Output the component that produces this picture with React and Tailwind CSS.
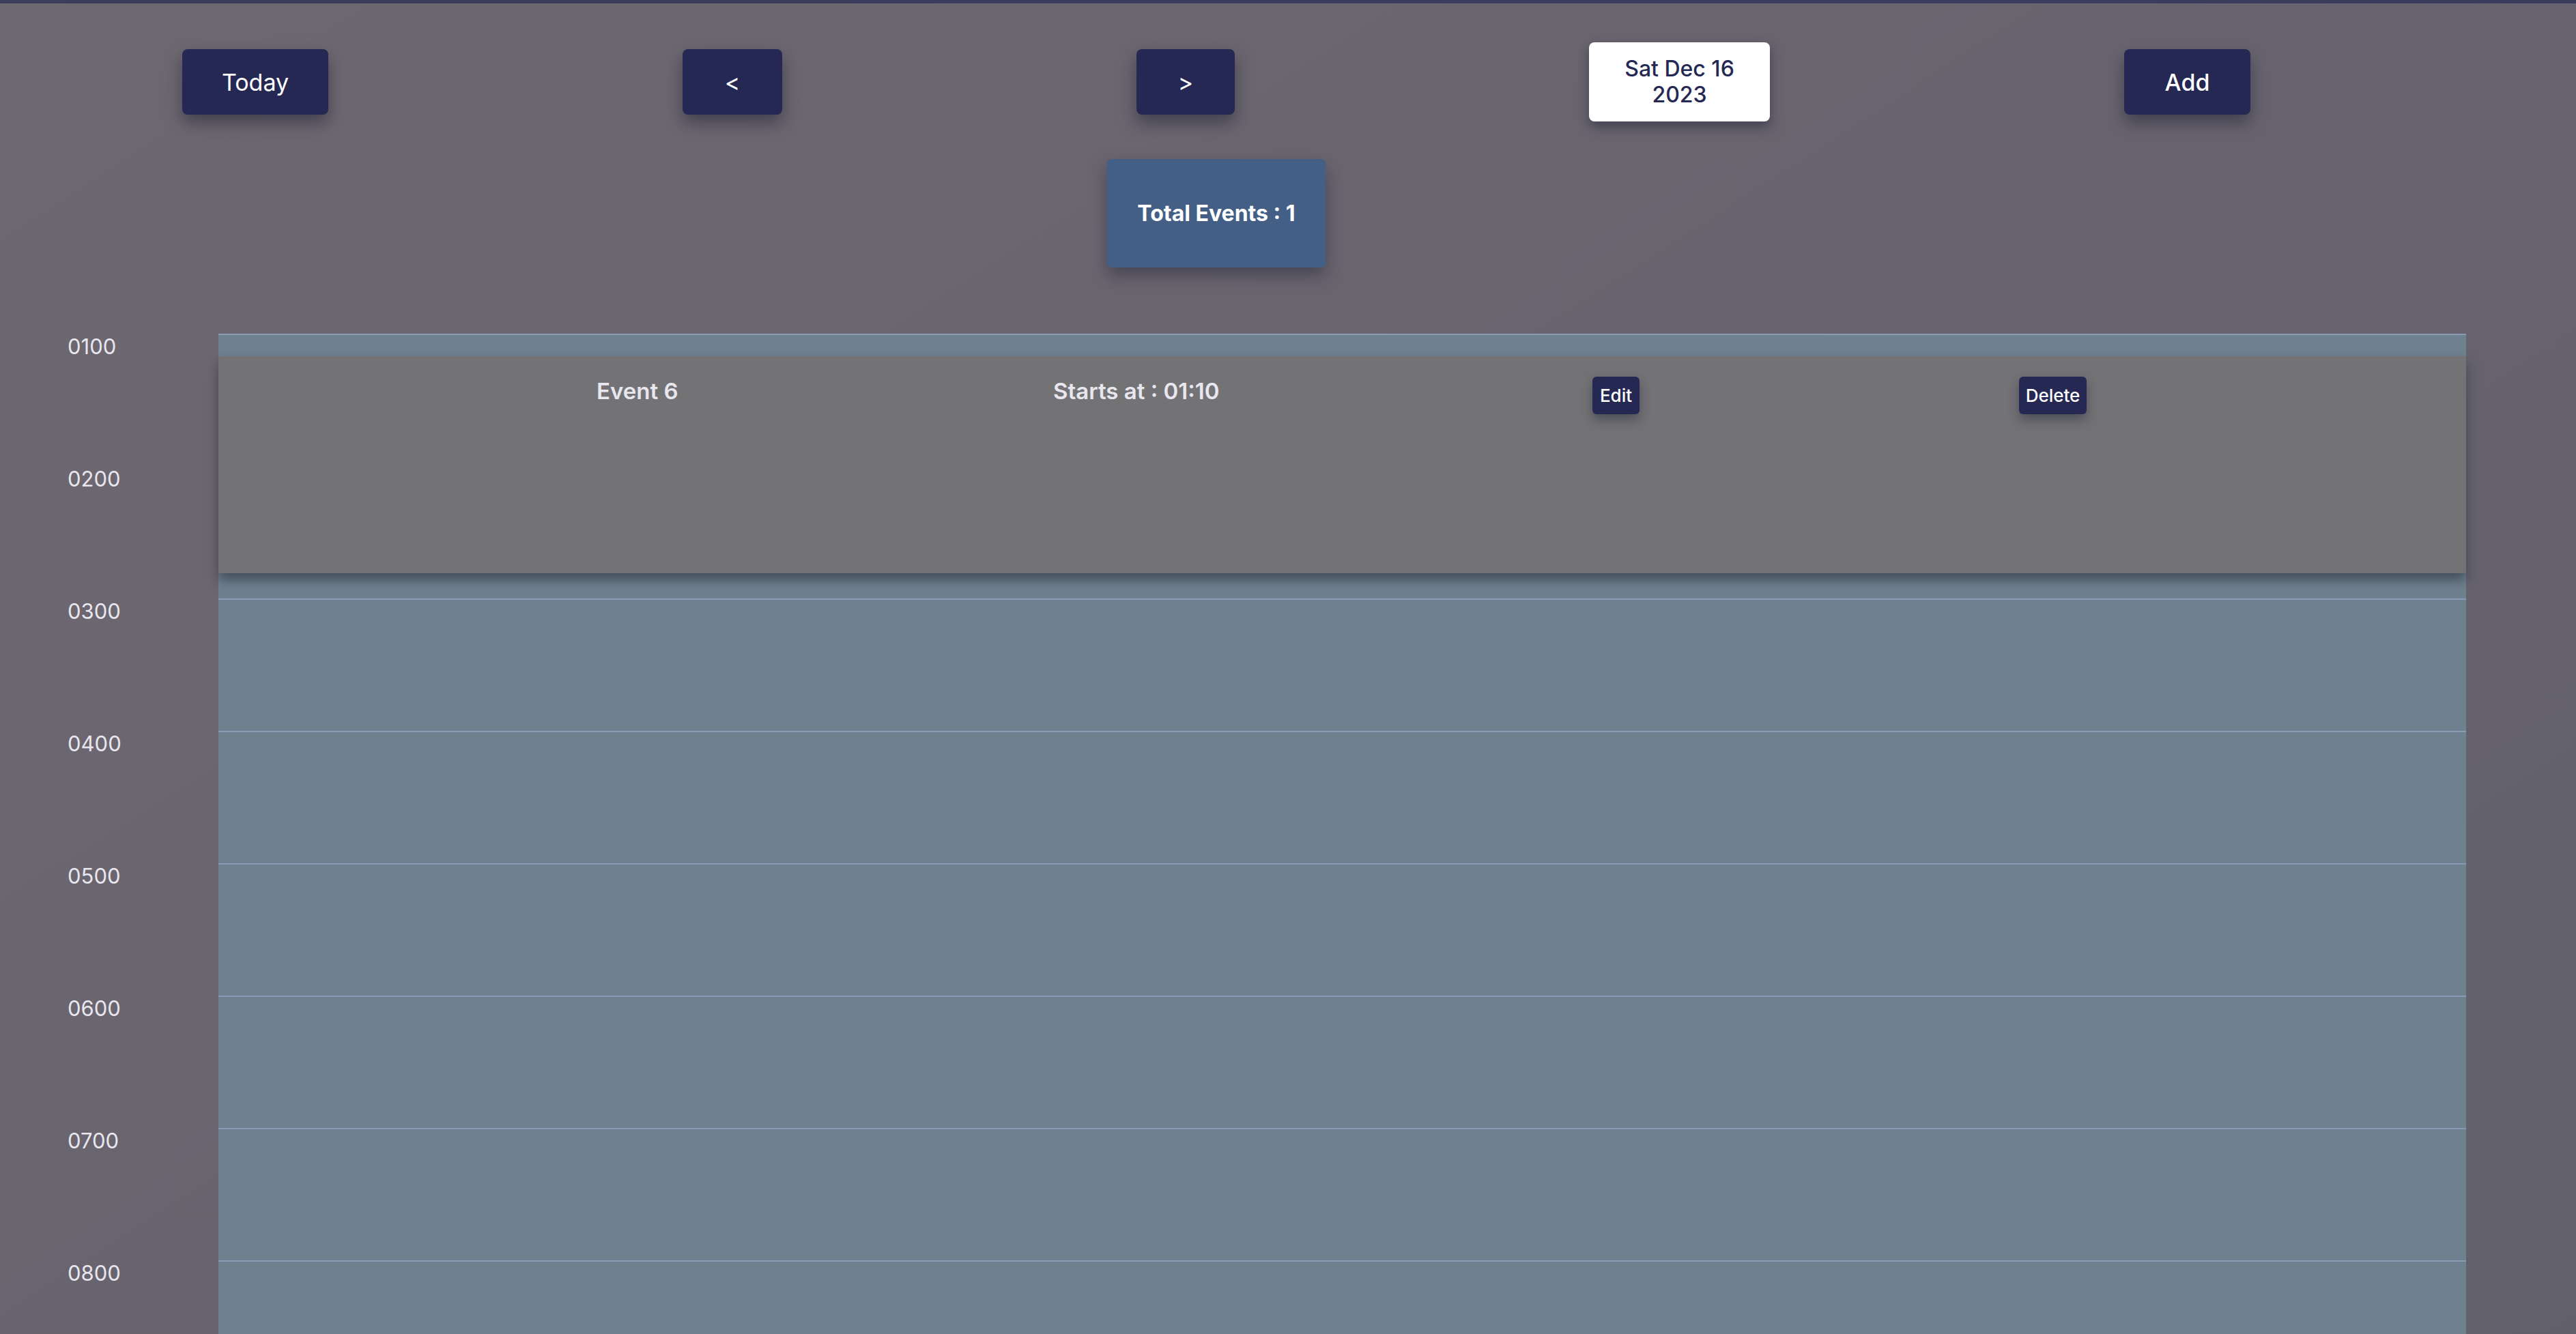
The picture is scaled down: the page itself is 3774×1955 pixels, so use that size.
import React from 'react'

const hours = ['0100', '0200', '0300', '0400', '0500', '0600', '0700', '0800', '0900', '1000']

export default function App() {
  return (
    <div
      className="min-h-[1955px] w-[3774px] overflow-hidden border-t-[5px] border-[#3b3d5c] bg-gradient-to-br from-[#6e6870] to-[#615f6d] text-white"
      style={{ fontFamily: 'Inter, "Noto Sans", sans-serif' }}
    >
      {/* toolbar */}
      <div className="flex items-center gap-[519px] pl-[267px] pt-[55px] h-[175px]">
        <button className="w-[214px] h-[96px] rounded-lg bg-[#242852] text-[34px] shadow-[0_12px_24px_rgba(40,40,60,0.6)]">Today</button>
        <button className="w-[146px] h-[96px] rounded-lg bg-[#242852] text-[34px] shadow-[0_12px_24px_rgba(40,40,60,0.6)]">&lt;</button>
        <button className="w-[144px] h-[96px] rounded-lg bg-[#242852] text-[34px] shadow-[0_12px_24px_rgba(40,40,60,0.6)]">&gt;</button>
        <div className="w-[265px] h-[116px] rounded-lg bg-white text-[#242852] text-[32px] leading-[38px] font-medium flex flex-col items-center justify-center shadow-[0_8px_18px_rgba(40,40,60,0.6)]">
          <span>Sat Dec 16</span>
          <span>2023</span>
        </div>
        <button className="w-[185px] h-[96px] rounded-lg bg-[#242852] text-[34px] font-medium shadow-[0_12px_24px_rgba(40,40,60,0.6)]">Add</button>
      </div>

      {/* total */}
      <div className="flex pl-[1622px] pt-[53px]">
        <div className="w-[320px] h-[159px] rounded-md bg-[#445f85] flex items-center justify-center text-[32px] font-bold shadow-[0_12px_24px_rgba(40,40,60,0.5)]">
          Total Events : 1
        </div>
      </div>

      {/* day grid */}
      <div className="mt-[97px] flex">
        <div className="w-[320px] shrink-0">
          {hours.map((h) => (
            <div key={h} className="h-[194px] pl-[99px] text-[31px] leading-[38px] text-[#e8e6ee]">{h}</div>
          ))}
        </div>
        <div className="relative w-[3293px] bg-[#6f808f] border-t-2 border-[#8a9bb5]">
          {hours.map((h) => (
            <div key={h} className="h-[194px] border-b-2 border-[#8a9bb5]" />
          ))}
          <div className="absolute left-0 right-0 top-[31px] h-[318px] bg-[#737376] shadow-[0_10px_16px_rgba(50,55,70,0.7)] flex items-start pt-[27px] text-[#e8e6ee] text-[33px] font-semibold">
            <span className="ml-[554px] w-[669px]">Event 6</span>
            <span className="w-[790px]">Starts at : 01:10</span>
            <button className="mt-[3px] w-[69px] h-[55px] rounded-md bg-[#242852] text-white text-[26px] font-medium shadow-[0_8px_16px_rgba(40,40,60,0.5)]">Edit</button>
            <button className="mt-[3px] ml-[556px] w-[99px] h-[55px] rounded-md bg-[#242852] text-white text-[26px] font-medium shadow-[0_8px_16px_rgba(40,40,60,0.5)]">Delete</button>
          </div>
        </div>
      </div>
    </div>
  )
}
